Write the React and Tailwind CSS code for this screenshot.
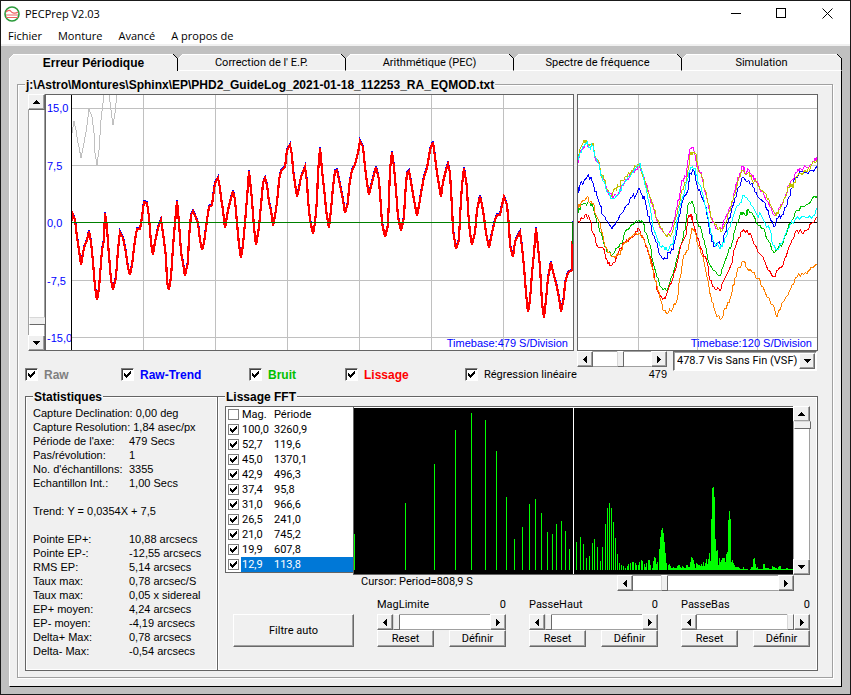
import { useState } from "react";

const bevel =
  "border border-t-white border-l-white border-r-[#696969] border-b-[#696969] bg-[#f0f0f0] shadow-[inset_-1px_-1px_0_#a0a0a0]";

const tabs = [
  "Erreur Périodique",
  "Correction de l' E.P.",
  "Arithmétique (PEC)",
  "Spectre de fréquence",
  "Simulation",
];

const curves = [
  { name: "Raw", color: "text-[#808080]", width: "w-24" },
  { name: "Raw-Trend", color: "text-[#0000ff]", width: "w-32" },
  { name: "Bruit", color: "text-[#00c000]", width: "w-24" },
  { name: "Lissage", color: "text-[#ff0000]", width: "w-[120px]" },
];

const stats = [
  ["Capture Declination:", "0,00 deg"],
  ["Capture Resolution:", "1,84 asec/px"],
  ["Période de l'axe:", "479 Secs"],
  ["Pas/révolution:", "1"],
  ["No. d'échantillons:", "3355"],
  ["Echantillon Int.:", "1,00 Secs"],
  null,
  ["Trend:", "Y = 0,0354X + 7,5"],
  null,
  ["Pointe EP+:", "10,88 arcsecs"],
  ["Pointe EP-:", "-12,55 arcsecs"],
  ["RMS EP:", "5,14 arcsecs"],
  ["Taux max:", "0,78 arcsec/S"],
  ["Taux max:", "0,05 x sidereal"],
  ["EP+ moyen:", "4,24 arcsecs"],
  ["EP- moyen:", "-4,19 arcsecs"],
  ["Delta+ Max:", "0,78 arcsecs"],
  ["Delta- Max:", "-0,54 arcsecs"],
];

const inlineStats = ["Capture Declination:", "Capture Resolution:", "Trend:"];

const peaks = [
  ["Mag.", "Période"],
  ["100,0", "3260,9"],
  ["52,7", "119,6"],
  ["45,0", "1370,1"],
  ["42,9", "496,3"],
  ["37,4", "95,8"],
  ["31,0", "966,6"],
  ["26,5", "241,0"],
  ["21,0", "745,2"],
  ["19,9", "607,8"],
  ["12,9", "113,8"],
];

const raw1 =
  "72,133 74,121 76,130 78,143 79,147 81,158 84,143 86,132 87,125 89,109 92,117 94,133 95,153 97,165 99,150 101,120 103,103 104,94";
const raw2 = "109,94 111,110 113,125 115,113 117,94";

const smooth =
  "72,221 73,215 75,220 77,237 79,250 81,265 84,248 87,240 89,231 91,242 93,262 95,287 97,300 99,288 102,250 104,240 105,213 107,227 108,243 111,280 113,290 116,277 118,250 120,232 123,238 126,253 128,268 130,275 132,265 135,240 137,229 140,229 142,217 144,202 147,203 149,217 151,243 153,255 155,242 158,228 161,220 163,233 166,257 167,282 169,290 171,277 173,247 175,223 177,201 179,223 181,252 183,263 185,276 188,262 189,237 191,215 193,211 196,218 198,223 200,240 202,250 204,243 207,220 209,207 212,205 213,197 215,183 218,178 220,188 221,198 223,210 225,228 228,210 231,198 233,191 235,200 237,223 239,245 241,258 243,245 245,223 247,198 249,171 252,200 254,227 256,245 259,227 261,205 263,183 265,178 267,185 269,202 271,210 273,226 276,210 278,193 279,180 281,171 285,167 287,150 290,145 292,155 293,170 297,197 299,188 301,177 305,167 307,182 308,200 310,220 313,234 315,223 317,200 318,173 320,148 322,170 325,197 326,210 329,228 331,210 333,187 335,171 337,170 340,185 343,200 345,213 348,203 349,187 352,170 355,165 358,153 360,141 363,147 365,167 367,183 369,195 372,182 376,167 379,180 381,207 382,223 385,237 388,225 389,197 390,170 392,152 394,167 396,190 398,217 401,231 404,217 405,197 407,173 409,171 411,182 414,200 417,216 420,200 421,193 424,177 427,168 430,150 433,142 435,157 437,173 441,197 443,182 446,170 448,164 450,173 452,207 453,230 456,249 459,240 460,217 462,185 464,168 467,187 468,210 470,233 472,245 475,233 477,210 480,196 482,205 484,217 486,233 489,248 492,233 495,220 497,215 500,215 502,205 504,197 507,205 509,227 510,245 513,257 515,242 518,235 520,232 522,247 524,267 526,293 528,312 530,300 532,273 534,253 536,228 538,247 540,267 542,303 544,318 546,300 548,278 551,262 553,272 557,287 559,298 561,312 564,297 565,283 568,273 572,270 573,222";

const cycles = [
  {
    color: "#00c000",
    data: "578,213 581,205 585,203 590,203 593,207 597,222 601,233 605,247 608,253 613,254 617,248 622,243 625,232 630,227 635,222 639,220 643,223 646,233 650,245 653,262 657,277 661,287 667,291 670,282 674,270 678,255 683,238 686,223 688,205 692,201 694,207 697,220 702,233 705,245 709,263 713,270 720,276 723,267 728,253 732,243 735,230 740,215 743,212 746,216 748,209 753,215 758,225 763,228 768,240 774,253 778,248 783,243 788,228 792,220 797,210 803,207 808,204 815,196 818,198",
  },
  {
    color: "#ff0000",
    data: "578,221 583,219 586,214 590,220 593,233 598,247 603,248 607,260 610,266 615,262 620,248 625,242 630,239 635,235 638,228 643,238 647,248 652,263 655,280 658,292 662,298 665,299 668,290 673,278 677,263 681,245 686,235 688,218 691,214 693,222 697,237 702,250 707,262 710,280 714,287 720,291 723,282 728,272 732,263 734,250 739,237 742,232 747,230 752,238 758,252 763,257 768,270 774,277 778,270 783,265 788,250 792,240 797,230 802,233 807,230 812,223 818,217",
  },
  {
    color: "#ff8000",
    data: "578,208 581,203 587,197 590,202 593,203 596,215 600,223 604,242 608,253 613,256 620,255 623,245 628,240 633,235 640,233 644,240 648,250 652,267 655,280 659,292 663,310 668,313 673,308 677,300 680,278 684,255 688,250 692,228 695,232 698,245 703,257 707,277 711,297 714,308 717,317 722,318 725,308 729,303 732,292 735,278 739,267 744,261 747,268 752,272 758,278 763,287 767,297 773,305 777,317 782,303 788,295 792,285 797,277 802,273 807,274 811,267 818,265",
  },
  {
    color: "#0000ff",
    data: "578,193 580,185 584,181 587,177 591,177 594,187 597,196 600,205 603,215 608,222 612,229 616,222 622,213 627,205 632,197 636,195 639,188 642,195 645,200 647,210 650,222 653,235 657,243 659,253 662,258 666,259 669,252 673,250 677,230 679,217 683,200 688,190 690,173 694,171 697,185 701,195 706,207 709,227 712,242 715,246 718,243 722,245 725,233 728,223 731,213 735,198 739,187 743,177 747,182 752,183 755,192 759,198 765,203 769,215 774,227 778,218 782,215 786,207 789,197 792,188 795,178 802,171 807,173 812,170 818,168",
  },
  {
    color: "#ff00ff",
    data: "578,163 580,152 584,147 586,143 589,148 593,145 595,158 599,163 601,175 604,180 607,190 613,198 619,192 622,185 627,180 632,172 636,169 639,165 644,177 648,190 650,198 653,207 656,217 659,225 663,232 667,236 671,230 674,220 677,207 680,193 682,180 686,177 688,160 690,149 693,147 695,155 697,167 701,172 704,188 707,199 710,213 713,223 717,228 722,229 724,220 728,213 732,203 735,190 737,182 740,173 743,166 745,173 749,170 752,177 755,178 759,187 764,195 770,207 774,215 777,213 780,207 783,202 786,194 789,185 792,180 797,172 800,168 807,168 812,164 815,158 818,160",
  },
  {
    color: "#c0c000",
    data: "578,160 580,149 583,143 586,140 589,146 593,143 595,156 599,162 601,174 604,179 607,189 611,197 615,188 619,187 622,180 627,177 632,170 636,167 639,164 644,178 648,192 651,199 654,209 657,219 661,228 665,234 667,237 672,233 676,217 679,205 682,190 686,182 689,165 690,155 693,152 696,154 698,169 702,177 705,190 709,205 711,217 715,225 719,229 722,231 726,222 729,212 733,200 736,190 739,177 743,170 746,175 749,172 752,180 757,183 760,189 766,194 770,204 776,216 779,210 783,203 787,192 790,183 793,188 796,177 800,173 807,172 811,166 818,158",
  },
  {
    color: "#00ffff",
    data: "578,160 580,153 584,146 587,142 589,147 593,146 595,157 599,164 601,176 604,181 607,192 613,199 619,194 622,186 627,179 632,173 636,168 640,163 644,180 647,193 651,213 653,227 657,238 660,246 664,247 667,250 672,245 675,235 677,220 681,203 685,190 689,172 691,168 695,168 698,182 701,187 704,200 708,217 711,233 714,242 719,247 722,247 725,238 730,227 733,217 736,208 740,203 744,195 748,200 753,207 757,215 761,215 765,223 770,230 773,245 777,250 782,243 786,233 790,225 795,220 802,216 808,218 813,216 818,208",
  },
];

// x position then height of every line of the FFT
const lines = [
  354, 36, 405, 67, 434, 106, 455, 140, 471, 157, 485, 150, 496, 119, 506, 73,
  514, 31, 522, 43, 529, 66, 535, 71, 541, 57, 547, 38, 552, 36, 556, 46, 561,
  49, 565, 39, 569, 21, 576, 28, 580, 33, 583, 26, 586, 12, 589, 14, 592, 27,
  594, 31, 597, 23, 600, 9, 602, 23, 605, 46, 607, 62, 609, 67, 611, 62, 613,
  48, 615, 32, 617, 16, 619, 7, 621, 5, 623, 4, 625, 2, 627, 4, 628, 6, 630, 7,
  632, 8, 633, 8, 635, 7, 636, 5, 638, 5, 639, 8, 641, 10, 642, 9, 644, 6, 645,
  3, 646, 7, 648, 10, 649, 10, 650, 5, 652, 2, 653, 9, 654, 13, 655, 12, 656, 6,
  657, 8, 659, 21, 660, 33, 661, 40, 662, 42, 663, 37, 664, 28, 665, 17, 666, 7,
];

// same pairs, but each height holds until the next x
const tail = [
  668, 5, 669, 6, 670, 4, 671, 2, 673, 3, 674, 2, 677, 4, 678, 5, 680, 3, 681,
  2, 682, 4, 683, 3, 684, 2, 686, 5, 688, 3, 690, 8, 691, 13, 692, 12, 693, 10,
  694, 6, 695, 2, 696, 7, 697, 6, 698, 5, 700, 4, 701, 6, 702, 4, 703, 8, 704,
  4, 705, 7, 706, 11, 707, 6, 708, 11, 709, 17, 710, 9, 711, 51, 712, 82, 713,
  83, 714, 73, 715, 31, 716, 19, 717, 20, 718, 5, 719, 12, 720, 8, 721, 10, 722,
  12, 725, 8, 726, 16, 727, 18, 728, 50, 729, 59, 730, 51, 731, 8, 732, 10, 733,
  7, 734, 5, 735, 3, 739, 2, 740, 1, 743, 3, 744, 1, 748, 0, 750, 1, 751, 3,
  753, 11, 754, 12, 755, 6, 756, 2, 757, 3, 758, 1, 763, 6, 765, 2, 769, 1, 772,
  4, 773, 3, 775, 2, 777, 1, 778, 3, 779, 4, 781, 1, 786, 2, 788, 1, 793, 0,
];

// sampled curves are a bit noisy between their main points
function noisy(data) {
  const pts = data.split(" ").map((p) => p.split(",").map(Number));
  const out = [];
  pts.forEach(([x, y], i) => {
    out.push(x + "," + y);
    const next = pts[i + 1];
    if (next) {
      const dx = (next[0] - x) / 3;
      const dy = (next[1] - y) / 3;
      const n = ((x * 7 + y * 13) % 5) - 2;
      out.push(x + dx + "," + (y + dy + n));
      out.push(x + dx * 2 + "," + (y + dy * 2 - n));
    }
  });
  return out.join(" ");
}

function Arrow({ dir }) {
  const paths = {
    up: "M3 0h1v1h1v1h1v1h1v1H0V3h1V2h1V1h1z",
    down: "M0 0h7v1H6v1H5v1H4v1H3V3H2V2H1V1H0z",
    left: "M3 0h1v7H3V6H2V5H1V4H0V3h1V2h1V1h1z",
    right: "M0 0h1v1h1v1h1v1h1v1H3v1H2v1H1v1H0z",
  };
  const flat = dir === "up" || dir === "down";
  return (
    <svg
      width={flat ? 7 : 4}
      height={flat ? 4 : 7}
      shapeRendering="crispEdges"
      aria-hidden="true"
    >
      <path d={paths[dir]} fill="#000" />
    </svg>
  );
}

function HScroll({ label, value }) {
  return (
    <div className="flex h-4 w-full bg-white border-y border-t-[#a0a0a0] border-b-[#a0a0a0]">
      <button
        aria-label={label + " -"}
        className={"-my-px flex w-4 shrink-0 items-center justify-center " + bevel}
      >
        <Arrow dir="left" />
      </button>
      <input
        type="range"
        aria-label={label}
        defaultValue={value}
        className="-my-px h-4 w-0 min-w-0 flex-1 appearance-none bg-transparent [&::-webkit-slider-thumb]:h-4 [&::-webkit-slider-thumb]:w-[7px] [&::-webkit-slider-thumb]:appearance-none [&::-webkit-slider-thumb]:border [&::-webkit-slider-thumb]:border-t-white [&::-webkit-slider-thumb]:border-l-[#d8d8d8] [&::-webkit-slider-thumb]:border-r-[#696969] [&::-webkit-slider-thumb]:border-b-[#696969] [&::-webkit-slider-thumb]:bg-[#f0f0f0]"
      />
      <button
        aria-label={label + " +"}
        className={"-my-px flex w-4 shrink-0 items-center justify-center " + bevel}
      >
        <Arrow dir="right" />
      </button>
    </div>
  );
}

function VScroll({ label, value }) {
  return (
    <div className="flex w-[17px] shrink-0 flex-col border-x border-[#a0a0a0] bg-white">
      <button
        aria-label={label + " -"}
        className={"-mx-px flex h-4 shrink-0 items-center justify-center " + bevel}
      >
        <Arrow dir="up" />
      </button>
      <input
        type="range"
        aria-label={label}
        defaultValue={value}
        className="-mx-px h-0 min-h-0 w-[17px] flex-1 appearance-none bg-transparent [writing-mode:vertical-lr] [&::-webkit-slider-thumb]:h-2 [&::-webkit-slider-thumb]:w-[17px] [&::-webkit-slider-thumb]:appearance-none [&::-webkit-slider-thumb]:border [&::-webkit-slider-thumb]:border-t-[#d8d8d8] [&::-webkit-slider-thumb]:border-l-white [&::-webkit-slider-thumb]:border-r-[#696969] [&::-webkit-slider-thumb]:border-b-[#696969] [&::-webkit-slider-thumb]:bg-[#f0f0f0]"
      />
      <button
        aria-label={label + " +"}
        className={"-mx-px flex h-4 shrink-0 items-center justify-center " + bevel}
      >
        <Arrow dir="down" />
      </button>
    </div>
  );
}

function Check({ id, small, checked }) {
  return (
    <span className={"relative shrink-0 " + (small ? "size-[11px]" : "size-[13px]")}>
      <input
        type="checkbox"
        id={id}
        defaultChecked={checked}
        className={
          "peer block size-full appearance-none border bg-white " +
          (small
            ? "border-[#808080]"
            : "border-t-[#808080] border-l-[#808080] border-r-white border-b-white shadow-[inset_1px_1px_0_#404040]")
        }
      />
      <svg
        viewBox="0 0 7 7"
        shapeRendering="crispEdges"
        className={
          "pointer-events-none absolute hidden size-[7px] peer-checked:block " +
          (small ? "top-[2px] left-[2px]" : "top-[3px] left-[3px]")
        }
      >
        <path d="M0 2h1v1h1v1h1V3h1V2h1V1h1V0h1v3H6v1H5v1H4v1H3v1H2V6H1V5H0z" />
      </svg>
    </span>
  );
}

function Tab({ name, active, onClick }) {
  return (
    <button
      role="tab"
      aria-selected={active}
      onClick={onClick}
      className={
        "relative flex h-[17px] items-center justify-center border-t border-r border-t-white border-r-black bg-[#f0f0f0] " +
        (active
          ? "border-l border-l-white text-xs font-bold"
          : "border-b border-b-white font-['Roboto','Liberation_Sans',sans-serif]")
      }
    >
      <svg
        width="5"
        height="5"
        shapeRendering="crispEdges"
        className={"absolute -top-px " + (active ? "-left-px" : "left-0")}
      >
        <path d="M0 0h5L0 5z" fill="#c0c0c0" />
        <path d="M0 5L5 0" stroke="#fff" />
      </svg>
      {name}
      <svg
        width="5"
        height="5"
        shapeRendering="crispEdges"
        className="absolute -top-px -right-px"
      >
        <path d="M0 0h5v5z" fill="#c0c0c0" />
        <path d="M0 0L5 5" stroke="#000" />
      </svg>
    </button>
  );
}

function FilterControl({ name, value }) {
  return (
    <div>
      <div className="mb-[2px] flex justify-between">
        <span>{name}</span>
        <span>0</span>
      </div>
      <HScroll label={name} value={value} />
      <div className="flex justify-between">
        <button className={"h-[17px] w-[57px] " + bevel}>Reset</button>
        <button className={"h-[17px] w-[57px] " + bevel}>Définir</button>
      </div>
    </div>
  );
}

function MainChart() {
  return (
    <div className="relative flex min-w-0 flex-1 border border-[#646464] bg-white">
      <div className="flex w-[25px] shrink-0 flex-col justify-between pt-[6px] pb-[5px] pl-px whitespace-nowrap text-[#0000ff]">
        <span>15,0</span>
        <span>7,5</span>
        <span>0,0</span>
        <span>-7,5</span>
        <span>-15,0</span>
      </div>
      <div className="min-w-0 flex-1 border-l border-black">
        <svg
          viewBox="72 95 501 255"
          preserveAspectRatio="none"
          shapeRendering="crispEdges"
          className="block size-full"
          fill="none"
        >
          <path
            d="M143.5 95v255M215.5 95v255M287.5 95v255M359.5 95v255M431.5 95v255M503.5 95v255M72 108.5h501M72 165.5h501M72 280.5h501M72 337.5h501"
            stroke="#c0c0c0"
          />
          <polyline points={raw1} stroke="#c0c0c0" />
          <polyline points={raw2} stroke="#c0c0c0" />
          <polyline points={smooth} stroke="#0000ff" strokeWidth="2" transform="translate(0 -1)" />
          <polyline points={smooth} stroke="#ff0000" strokeWidth="2.2" />
          <path d="M72 222.5h501M572.5 222v22" stroke="#008000" />
        </svg>
      </div>
      <span className="absolute right-[5px] bottom-0 text-[#0000ff]">
        Timebase:479 S/Division
      </span>
    </div>
  );
}

function CycleChart() {
  return (
    <div className="relative h-[257px] border border-[#646464] bg-white">
      <svg
        viewBox="578 95 239 255"
        preserveAspectRatio="none"
        shapeRendering="crispEdges"
        className="block size-full"
        fill="none"
      >
        <path
          d="M638.5 95v255M697.5 95v255M757.5 95v255M578 108.5h239M578 165.5h239M578 280.5h239M578 337.5h239"
          stroke="#c0c0c0"
        />
        <path d="M578 222.5h239" stroke="#000" />
        {cycles.map((c) => (
          <polyline key={c.color} points={noisy(c.data)} stroke={c.color} />
        ))}
      </svg>
      <span className="absolute right-[5px] bottom-0 text-[#0000ff]">
        Timebase:120 S/Division
      </span>
    </div>
  );
}

function Spectrum() {
  let d = "";
  for (let i = 0; i < lines.length; i += 2) {
    d += `M${lines[i]} 570h1v-${lines[i + 1]}h-1z`;
  }
  for (let i = 0; i < tail.length - 2; i += 2) {
    const w = tail[i + 2] - tail[i];
    d += `M${tail[i]} 570h${w}v-${tail[i + 1]}h-${w}z`;
  }

  return (
    <div className="h-[169px] min-w-0 flex-1 border-y border-l border-[#646464] bg-black">
      <svg
        viewBox="354 408 439 166"
        preserveAspectRatio="none"
        shapeRendering="crispEdges"
        className="block size-full border-t border-white"
      >
        <path d={d} fill="#00ff00" />
        <path d="M573.5 408v166" stroke="#fff" vectorEffect="non-scaling-stroke" />
      </svg>
    </div>
  );
}

export default function App() {
  const [tab, setTab] = useState(0);

  return (
    <div className="flex min-h-screen flex-col border border-[#1a1a1a] bg-[#c0c0c0] font-['Liberation_Sans',Arial,sans-serif] text-[11px] leading-[14px] text-black">
      <header className="flex h-[25px] items-center bg-white pl-[3px] font-['Open_Sans','Noto_Sans',sans-serif]">
        <svg width="16" height="16" viewBox="0 0 16 16" fill="none">
          <circle cx="8" cy="8" r="7" fill="#fff" stroke="#2a9a3a" strokeWidth="1.6" />
          <path d="M2 6c2-2 4-2 5-.5S11 8 14 6M2 11.500h12" stroke="#f06060" strokeWidth="1.2" />
          <path d="M2 9h12" stroke="#f06060" />
        </svg>
        <h1 className="ml-[5px] flex-1">PECPrep V2.03</h1>
        <button aria-label="Réduire" className="flex h-full w-[46px] items-center justify-center">
          <svg width="11" height="11" stroke="#000">
            <path d="M1 5.500h10" />
          </svg>
        </button>
        <button aria-label="Agrandir" className="flex h-full w-[46px] items-center justify-center">
          <svg width="11" height="11" fill="none" stroke="#000">
            <rect x=".5" y=".5" width="9" height="9" />
          </svg>
        </button>
        <button aria-label="Fermer" className="flex h-full w-[46px] items-center justify-center">
          <svg width="11" height="11" stroke="#000">
            <path d="M.5 .5l10 10M10.500 .5l-10 10" />
          </svg>
        </button>
      </header>

      <nav className="flex h-5 items-center gap-4 border-b-2 border-[#f0f0f0] bg-white pt-[2px] pl-[7px] font-['Open_Sans','Noto_Sans',sans-serif]">
        <button>Fichier</button>
        <button>Monture</button>
        <button>Avancé</button>
        <button>A propos de</button>
      </nav>

      <main className="flex flex-1 flex-col px-2 pt-2 pb-[7px]">
        <div role="tablist" className="grid grid-cols-[169fr_168fr_168fr_168fr_160fr]">
          {tabs.map((name, i) => (
            <Tab key={name} name={name} active={i === tab} onClick={() => setTab(i)} />
          ))}
        </div>

        <div className="flex-1 border-r border-b border-l border-r-black border-b-black border-l-white bg-[#f0f0f0] pt-[13px] pr-2 pb-2 pl-[7px]">
          <section className="border border-[#a0a0a0] pr-[14px] pb-[6px] pl-[7px] shadow-[1px_1px_0_#fff,inset_1px_1px_0_#fff]">
            <h2 className="-mt-[7px] mb-[2px] w-fit bg-[#f0f0f0] px-px text-xs leading-[14px] font-bold">
              j:\Astro\Montures\Sphinx\EP\PHD2_GuideLog_2021-01-18_112253_RA_EQMOD.txt
            </h2>

            <div className="flex gap-[3px]">
              <div className="min-w-0 flex-[549]">
                <div className="ml-[3px] flex h-[257px]">
                  <VScroll label="Echelle" value={95} />
                  <MainChart />
                </div>
                <div className="mt-[17px] flex h-[13px] items-center">
                  {curves.map((c) => (
                    <label
                      key={c.name}
                      className={"flex shrink-0 items-center gap-[6px] text-xs font-bold " + c.width + " " + c.color}
                    >
                      <Check checked />
                      {c.name}
                    </label>
                  ))}
                  <label className="flex items-center gap-[6px] font-['Roboto','Liberation_Sans',sans-serif] whitespace-nowrap">
                    <Check checked />
                    Régression linéaire
                  </label>
                </div>
              </div>

              <div className="min-w-0 flex-[241]">
                <CycleChart />
                <div className="flex items-start gap-[6px]">
                  <div className="w-[90px] shrink-0">
                    <HScroll label="Période" value={48} />
                    <div className="text-right">479</div>
                  </div>
                  <div className="relative mr-px min-w-0 flex-1">
                    <select
                      aria-label="Vis"
                      className="block h-5 w-full appearance-none border border-t-[#696969] border-r-white border-b-white border-l-[#696969] bg-white pl-[3px] font-['Roboto','Liberation_Sans',sans-serif] shadow-[inset_1px_1px_0_#a0a0a0]"
                    >
                      <option>478.7 Vis Sans Fin (VSF)</option>
                    </select>
                    <span
                      className={"pointer-events-none absolute top-[2px] right-[2px] flex h-4 w-4 items-center justify-center " + bevel}
                    >
                      <Arrow dir="down" />
                    </span>
                  </div>
                </div>
              </div>
            </div>

            <div className="mt-[15px] flex">
              <section className="w-48 shrink-0 border border-r-0 border-[#646464] pl-[7px] shadow-[inset_0_0_0_1px_#fff]">
                <h2 className="-mt-[7px] mb-[2px] w-fit bg-[#f0f0f0] px-px text-xs leading-[14px] font-bold">
                  Statistiques
                </h2>
                <dl>
                  {stats.map((s, i) =>
                    s ? (
                      <div key={i} className="flex gap-[3px] whitespace-nowrap">
                        <dt className={inlineStats.includes(s[0]) ? "" : "w-[93px]"}>{s[0]}</dt>
                        <dd>{s[1]}</dd>
                      </div>
                    ) : (
                      <div key={i} className="h-[14px]" />
                    )
                  )}
                </dl>
              </section>

              <section className="min-w-0 flex-1 border border-[#646464] px-[7px] pb-[23px] font-['Roboto','Liberation_Sans',sans-serif] shadow-[inset_0_0_0_1px_#fff]">
                <h2 className="-mt-[7px] mb-[2px] w-fit bg-[#f0f0f0] px-px font-['Liberation_Sans',Arial,sans-serif] text-xs leading-[14px] font-bold">
                  Lissage FFT
                </h2>
                <div className="flex">
                  <ul className="h-[167px] w-32 shrink-0 border border-r-0 border-[#646464] bg-white pl-[2px]">
                    {peaks.map(([mag, period], i) => (
                      <li key={mag} className="flex h-[15px] items-center gap-[2px]">
                        <Check small id={"peak" + i} checked={i > 0} />
                        <label
                          htmlFor={"peak" + i}
                          className={
                            "flex h-full flex-1 items-center pl-px " +
                            (i === 10 ? "bg-[#0078d7] text-white" : "")
                          }
                        >
                          <span className="w-8">{mag}</span>
                          <span>{period}</span>
                        </label>
                      </li>
                    ))}
                  </ul>
                  <Spectrum />
                  <VScroll label="Amplitude" value={0} />
                </div>

                <div className="flex h-4 justify-between pr-4 pl-[136px]">
                  <span>Cursor: Period=808,9 S</span>
                  <div className="w-[177px]">
                    <HScroll label="Curseur" value={20} />
                  </div>
                </div>

                <div className="mt-[7px] flex items-end pl-2">
                  <button className={"h-[33px] w-[121px] shrink-0 " + bevel}>Filtre auto</button>
                  <div className="ml-[23px] grid flex-1 grid-cols-3 gap-[23px]">
                    <FilterControl name="MagLimite" value={0} />
                    <FilterControl name="PasseHaut" value={0} />
                    <FilterControl name="PasseBas" value={100} />
                  </div>
                </div>
              </section>
            </div>
          </section>
        </div>
      </main>
    </div>
  );
}
